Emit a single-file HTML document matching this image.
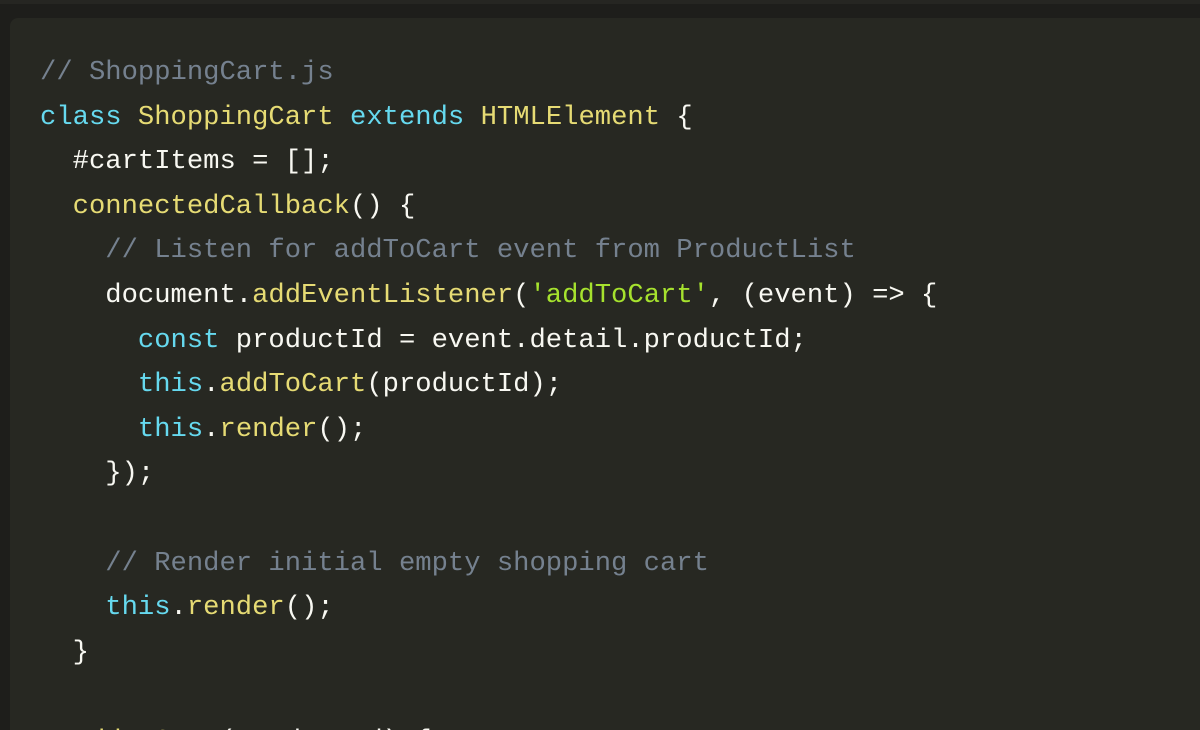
<!DOCTYPE html>
<html><head><meta charset="utf-8"><style>
html,body{margin:0;padding:0;background:#1e1e1b;width:1200px;height:730px;overflow:hidden}
.wrap{position:relative;width:1200px;height:730px;overflow:hidden;background:#1e1e1b}
.top{position:absolute;left:0;top:0;width:1200px;height:4px;background:#262622}
.panel{position:absolute;left:10px;top:18px;width:1190px;height:760px;background:#272822;border-radius:8px 0 0 0}
pre{position:absolute;left:40px;top:51px;margin:0;font-family:"Liberation Mono",monospace;font-size:27.2px;line-height:44.6px;color:#f8f8f2;white-space:pre}
.c{color:#75818f}.k{color:#66d9ef}.y{color:#e6db74}.s{color:#a6e22e}
</style></head><body><div class="wrap">
<div class="top"></div>
<div class="panel"></div>
<pre><span class="c">// ShoppingCart.js</span>
<span class="k">class</span> <span class="y">ShoppingCart</span> <span class="k">extends</span> <span class="y">HTMLElement</span> {
  #cartItems = [];
  <span class="y">connectedCallback</span>() {
    <span class="c">// Listen for addToCart event from ProductList</span>
    document.<span class="y">addEventListener</span>(<span class="s">'addToCart'</span>, (event) =&gt; {
      <span class="k">const</span> productId = event.detail.productId;
      <span class="k">this</span>.<span class="y">addToCart</span>(productId);
      <span class="k">this</span>.<span class="y">render</span>();
    });

    <span class="c">// Render initial empty shopping cart</span>
    <span class="k">this</span>.<span class="y">render</span>();
  }

  <span class="y">addToCart</span>(productId) {</pre>
</div></body></html>
